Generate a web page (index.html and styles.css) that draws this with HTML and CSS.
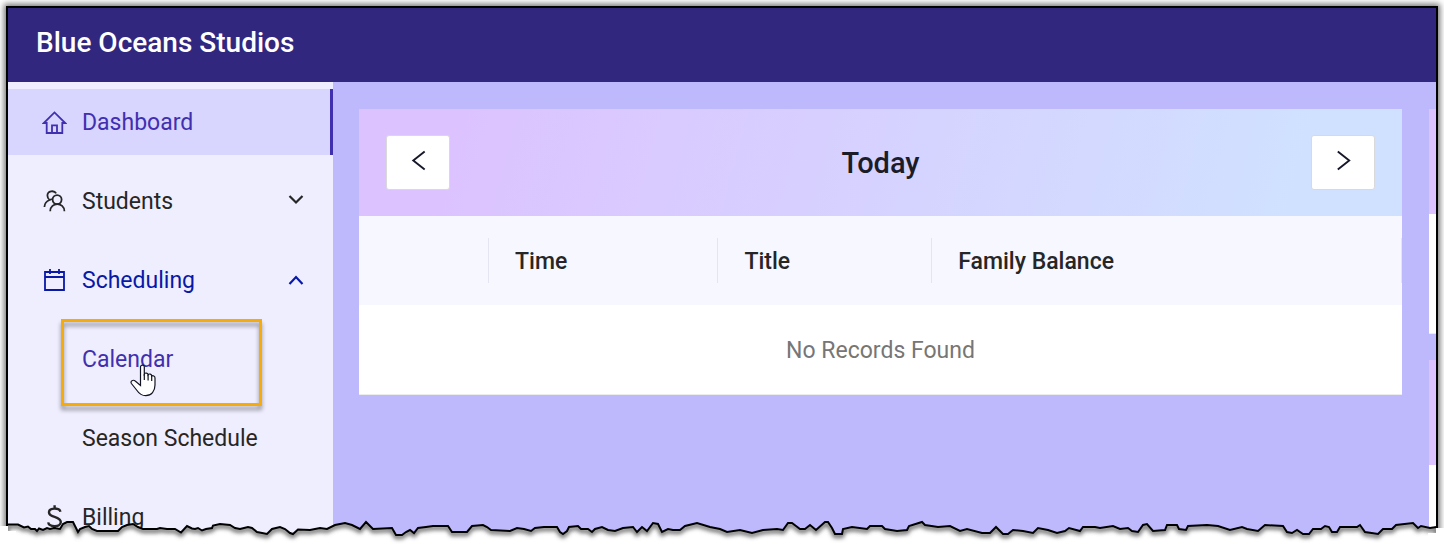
FILE: index.html
```html
<!DOCTYPE html>
<html lang="en">
<head>
<meta charset="utf-8">
<title>Blue Oceans Studios</title>
<link rel="stylesheet" href="styles.css">
</head>
<body>
<div class="window">
  <header class="topbar"><h1 class="brand">Blue Oceans Studios</h1></header>
  <div class="layout">
    <nav class="sidebar">
      <ul class="menu">
        <li><a class="item item-selected" href="#dashboard">
          <svg class="icon" viewBox="0 0 25 25"><path d="M1.8 13H4.7V23H20.3V13H23.2L12.5 2.4ZM10 23V15.4H15V23"/></svg>
          <span>Dashboard</span></a></li>
        <li><button class="item" type="button">
          <svg class="icon" viewBox="0 0 25 25"><circle cx="15.1" cy="10.6" r="4.5"/><path d="M8.2 22.2C8.4 12.8 22.2 12.8 22.4 22.2M14.2 4.4C12.2 1 5.4 1.6 5.4 6.6C5.4 8.8 6.3 10 7.6 11C4.2 12.2 2.6 14.8 2.4 18M7.6 11L10 10"/></svg>
          <span>Students</span>
          <svg class="arrow" viewBox="0 0 16 16"><path d="M1.5 3L8 9.5L14.5 3"/></svg></button></li>
        <li><button class="item item-open" type="button">
          <svg class="icon" viewBox="0 0 25 25"><path d="M3 4H22V22H3ZM3 9H22M8 1V6M17 1V6"/></svg>
          <span>Scheduling</span>
          <svg class="arrow" viewBox="0 0 16 16"><path d="M1.5 12L8 5L14.5 12"/></svg></button></li>
        <li class="marked"><a class="item item-sub item-active" href="#calendar"><span>Calendar</span></a>
          <div class="highlight"></div>
          <svg class="cursor" viewBox="0 0 26 33"><path d="M10.5 3C10.5 .5 14.3 .5 14.3 3V10C15.2 8.4 18 8.8 18.1 10.8C19.2 9.4 21.6 10 21.7 12C22.8 11.2 25 12 25 14V21C25 27 21.5 31.7 15.8 31.7C11.5 31.7 9 29.5 7 26.5L1.4 19.5C-.2 17 3.3 15.3 5.2 17L10.5 21.5Z"/><path d="M14.3 10V16M18.1 10.8V16.5M21.7 12V17"/></svg></li>
        <li><a class="item item-sub" href="#season"><span>Season Schedule</span></a></li>
        <li><a class="item" href="#billing">
          <svg class="icon" viewBox="0 0 25 25"><path d="M18.5 6.8C17.5 2.6 7 2.2 7 7.4C7 12.8 18.8 10.8 18.8 17C18.8 22.6 7 22.4 6.2 17.4M12.6 .2V3.5M12.6 21V25" stroke-width="2.4"/></svg>
          <span>Billing</span></a></li>
      </ul>
    </nav>
    <main class="content">
      <section class="card">
        <div class="card-head">
          <button class="step" type="button" aria-label="Previous day"><svg viewBox="0 0 20 22"><path d="M16.5 1.5L4.5 11L16.5 20.5"/></svg></button>
          <h2 class="day">Today</h2>
          <button class="step" type="button" aria-label="Next day"><svg viewBox="0 0 20 22"><path d="M4 1.5L16 11L4 20.5"/></svg></button>
        </div>
        <table class="records">
          <thead><tr>
            <th class="col-mark"><div class="label"></div></th>
            <th class="col-time"><div class="label">Time</div></th>
            <th class="col-title"><div class="label">Title</div></th>
            <th><div class="label">Family Balance</div></th>
          </tr></thead>
          <tbody><tr><td colspan="4">No Records Found</td></tr></tbody>
        </table>
      </section>
      <div class="aside">
        <div class="panel"></div>
        <div class="panel"></div>
      </div>
    </main>
  </div>
</div>
<svg class="torn" viewBox="0 0 1444 29" preserveAspectRatio="none">
  <defs>
    <path id="tear" d="M7 8.5H18L24 11.5L28 10.5L31 13L35 13L37 15L39 12.5L43 14L47 12L50 13L54 12L60 13L63 8L67 6H73L78 16L80 13L85 11L89 10L92 13L97 15H118L122 11L127 9L133 8L138 11L143 13L157 13L160 12L167 13L175 13L181 16.5L187 10L192 12.5L195 13L198 12L202 14.5L206 13L212 12L213 9.5L220 8L230 9L235 12L240 13L248 11L252 12L257 16L267 18L272 13L280 11L285 13L290 17L293 18L298 13.5L310 14L320 12L327 13L335 9L345 7L352 9L360 13L366 6L373 13L392 12L396 19H402L406 16L410 14L414 17L418 12L426 11L433 10L448 10L452 16L460 16L467 16L472 10L483 9L487 11L491 14L510 15L517 12L524 13L531 15L535 12L544 11L557 11L560 16L563 18L567 15L569 11L578 10L581 13L588 13L592 16L595 13L602 11L608 14L615 15L623 12L633 11L637 16L642 11L647 15L653 7L658 8L662 16L668 13L673 14L680 14L685 10L697 7L710 11L720 13L727 16L740 14L752 17L763 14L777 13L783 14L788 7H792L800 13H805L810 9L816 14L825 6H828L832 12L835 18H842L843 13L852 11L867 13L870 10H882L885 13L897 15L907 14L909 10L922 6L925 9L938 11L950 10L960 15L967 13L982 17H990L996 11L1003 18H1008L1013 14L1023 15L1033 17L1038 12L1048 14L1057 17L1065 15L1069 12L1080 15L1083 11L1095 11L1100 12L1113 10L1120 13L1128 12L1132 15L1138 16L1143 9L1147 8L1153 15L1165 14L1167 9H1177L1179 13L1186 14L1188 10L1207 9L1218 10L1230 14L1242 11L1247 13L1258 15L1265 9L1283 10L1287 16L1292 17L1297 14L1303 18H1309L1313 13H1321L1325 10L1329 11L1332 16H1337L1340 11H1357L1360 9L1365 16L1378 18L1383 13H1392L1396 9L1413 7L1418 12L1421 10L1430 12L1437 11V60H7Z"/>
    <clipPath id="below"><use href="#tear"/></clipPath>
    <filter id="soft" filterUnits="userSpaceOnUse" x="0" y="-6" width="1444" height="80"><feGaussianBlur stdDeviation="2"/></filter>
  </defs>
  <use href="#tear" class="paper"/>
  <g clip-path="url(#below)"><use href="#tear" class="edge-shade" filter="url(#soft)" y="2"/></g>
  <use href="#tear" class="edge-line"/>
  <rect class="paper" x="0" y="10" width="8" height="19"/>
  <rect class="paper" x="1436" y="12" width="8" height="17"/>
  <rect class="paper" x="0" y="15" width="16" height="14"/>
  <rect class="paper" x="1428" y="17" width="16" height="12"/>
</svg>
</body>
</html>
```
FILE: styles.css
```css
* { box-sizing: border-box; }
body {
  margin: 0;
  height: 100vh;
  padding: 6px 6px 8px;
  overflow: hidden;
  position: relative;
  background: #fff;
  font-family: Roboto, "Open Sans", sans-serif;
  font-size: 23px;
  color: #262626;
}
.window {
  height: 100%;
  display: flex;
  flex-direction: column;
  overflow: hidden;
  border: 2px solid #000;
  border-bottom: 0;
  box-shadow: 0 0 6px 2px rgba(0, 0, 0, .55);
}
.topbar {
  flex: none;
  padding: 17px 28px 21px;
  background: #31277f;
}
.brand {
  margin: 0;
  font-size: 28px;
  line-height: 36px;
  font-weight: 500;
  color: #fff;
}
.layout { flex: 1; display: flex; min-height: 0; }
.sidebar { flex: none; width: 325px; background: #efeeff; }
.menu {
  list-style: none;
  margin: 0;
  padding: 7px 0 0;
  display: grid;
  gap: 13px;
}
.item {
  display: flex;
  align-items: center;
  gap: 15px;
  width: 100%;
  height: 66px;
  padding: 0 29px 0 34px;
  border: 0;
  background: none;
  font: inherit;
  color: #262626;
  text-decoration: none;
}
.item-selected {
  background: #d8d5ff;
  border-right: 3px solid #4030b0;
  color: #4030b0;
}
.item-open { color: #0819a8; }
.item-active { color: #4030b0; }
.item-sub { padding-left: 74px; }
.icon {
  width: 25px;
  height: 25px;
  fill: none;
  stroke: currentColor;
  stroke-width: 1.8;
}
.arrow {
  width: 16px;
  height: 16px;
  margin-left: auto;
  fill: none;
  stroke: currentColor;
  stroke-width: 2.2;
}
.marked { position: relative; }
.highlight {
  position: absolute;
  left: 53px;
  top: -7px;
  width: 201px;
  height: 87px;
  border: 3px solid #f6ab0b;
  filter: drop-shadow(0 4px 2px rgba(0, 0, 0, .4));
  pointer-events: none;
}
.cursor {
  position: absolute;
  left: 122px;
  top: 38px;
  width: 26px;
  height: 33px;
  fill: #fff;
  stroke: #111322;
  stroke-width: 1.2;
}
.content {
  flex: 1;
  min-width: 0;
  display: grid;
  grid-template-columns: minmax(0, 1fr) 7px;
  gap: 27px;
  align-items: start;
  padding: 27px 0 0 26px;
  background: #beb9fd;
}
.card { background: #fff; }
.card-head {
  display: flex;
  align-items: center;
  justify-content: space-between;
  padding: 26px 27px;
  background: linear-gradient(105deg, #dcc3ff 10%, #d0e1ff 90%);
}
.day { margin: 0; font-size: 29px; line-height: 54px; font-weight: 500; color: #1c1c28; }
.step {
  display: grid;
  place-items: center;
  width: 64px;
  height: 55px;
  padding: 0 0 4px;
  border: 1px solid #d9d9d9;
  border-radius: 3px;
  background: #fff;
}
.step svg { width: 19px; height: 21px; fill: none; stroke: #16182a; stroke-width: 2; }
.records {
  width: 100%;
  table-layout: fixed;
  border-collapse: collapse;
  border-bottom: 1px solid #ececec;
}
.records th {
  padding: 22px 0;
  background: #f6f7ff;
  font-weight: 500;
  text-align: left;
}
.label {
  height: 45px;
  line-height: 47px;
  padding-left: 26px;
  border-right: 1px solid #e5e4f3;
}
.col-mark { width: 130px; }
.col-time { width: 22%; }
.col-title { width: 20.5%; }
.records td { padding: 2px 0 0; line-height: 87px; text-align: center; color: #767676; }
.aside { display: grid; gap: 26px; overflow: hidden; }
.panel {
  height: 225px;
  border-top: 105px solid #dcc3ff;
  border-bottom: 1px solid #ececec;
  background: #fff;
}
.torn {
  position: absolute;
  left: 0;
  bottom: 0;
  width: 100%;
  height: 29px;
}
.paper { fill: #fff; }
.edge-shade { fill: none; stroke: #666; stroke-width: 4; }
.edge-line { fill: none; stroke: #000; stroke-width: 2; }
```
